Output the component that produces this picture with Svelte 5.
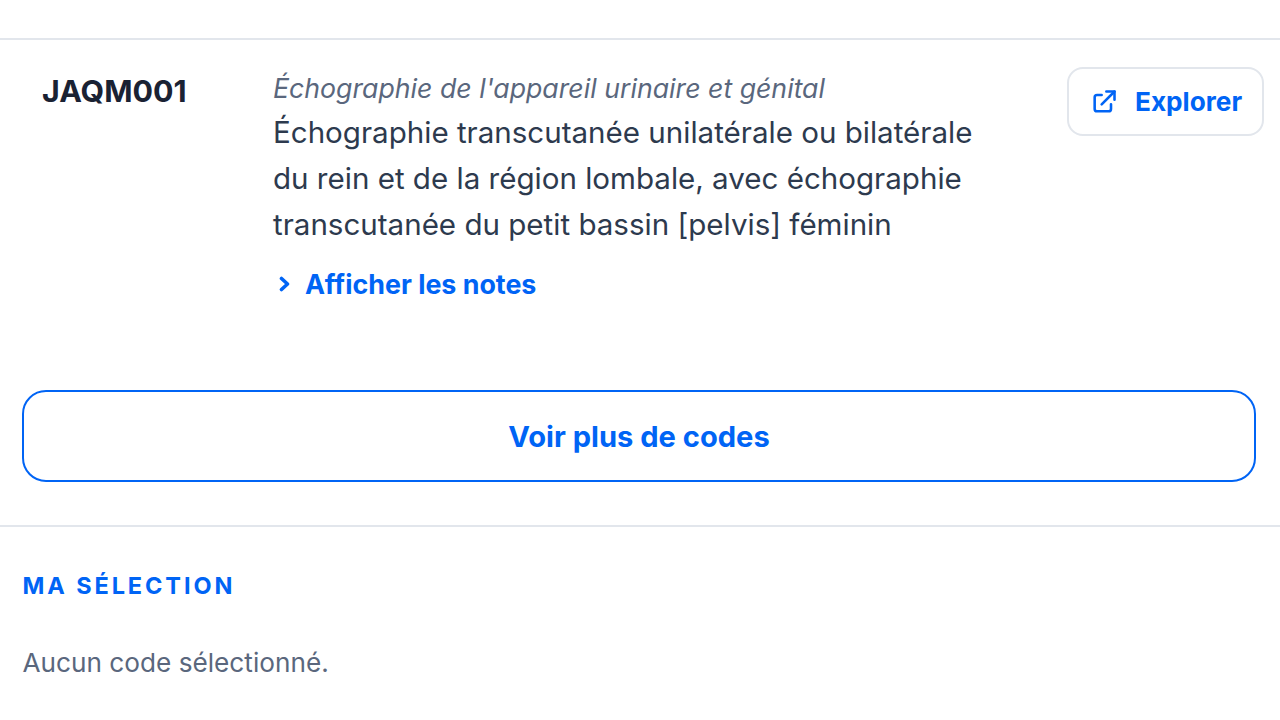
<script>
  let code = "JAQM001";
  let chapter = "Échographie de l'appareil urinaire et génital";
  let label = "Échographie transcutanée unilatérale ou bilatérale du rein et de la région lombale, avec échographie transcutanée du petit bassin [pelvis] féminin";
</script>

<div class="page">
  <div class="result">
    <div class="code">{code}</div>
    <div class="desc">
      <div class="chapter">{chapter}</div>
      <div class="label">{label}</div>
      <div class="notes">
        <svg width="16" height="16" viewBox="0 0 16 16" fill="none" stroke="currentColor" stroke-width="3.6" stroke-linecap="round" stroke-linejoin="round">
          <path d="M4.5 2.5 L10.5 8 L4.5 13.5" />
        </svg>
        <span>Afficher les notes</span>
      </div>
    </div>
    <button class="explore">
      <svg width="28" height="28" viewBox="0 0 24 24" fill="none" stroke="currentColor" stroke-width="2.2" stroke-linecap="round" stroke-linejoin="round">
        <path d="M10 6H6a2 2 0 0 0-2 2v10a2 2 0 0 0 2 2h10a2 2 0 0 0 2-2v-4" />
        <path d="M14 3h7v7" />
        <path d="M21 3L10 14" />
      </svg>
      <span>Explorer</span>
    </button>
  </div>

  <div class="more-wrap">
    <button class="more">Voir plus de codes</button>
  </div>

  <div class="selection">
    <h3>MA SÉLECTION</h3>
    <p>Aucun code sélectionné.</p>
  </div>
</div>

<style>
  :global(body) {
    margin: 0;
    background: #fff;
    font-family: Inter, "Liberation Sans", sans-serif;
  }

  .page {
    width: 1280px;
    height: 720px;
    overflow: hidden;
    padding-top: 38px;
    box-sizing: border-box;
  }

  .result {
    display: flex;
    align-items: flex-start;
    border-top: 2px solid #e2e6ec;
    padding: 27px 16px 0 42px;
    height: 324px;
    box-sizing: border-box;
  }

  .code {
    width: 231px;
    flex: none;
    font-size: 30.4px;
    line-height: 46px;
    margin-top: 1px;
    font-weight: 700;
    color: #1a2233;
  }

  .desc {
    flex: 1;
  }

  .chapter {
    font-size: 26.7px;
    line-height: 42px;
    font-style: italic;
    color: #5a677d;
  }

  .label {
    width: 720px;
    font-size: 29.55px;
    line-height: 46px;
    color: #2d3a4e;
  }

  .notes {
    display: flex;
    align-items: center;
    gap: 12px;
    margin-top: 15px;
    margin-left: 4px;
    font-size: 26.8px;
    line-height: 44px;
    font-weight: 700;
    color: #0064f5;
  }

  .explore {
    flex: none;
    width: 197px;
    height: 69px;
    display: flex;
    align-items: center;
    gap: 17px;
    padding: 0 0 0 21px;
    background: #fff;
    border: 2px solid #e2e6ec;
    border-radius: 16px;
    font-family: inherit;
    font-size: 26.2px;
    font-weight: 700;
    color: #0064f5;
  }

  .more-wrap {
    padding: 28px 24px 43px 22px;
    border-bottom: 2px solid #e2e6ec;
  }

  .more {
    display: block;
    width: 100%;
    height: 92px;
    background: #fff;
    border: 2px solid #0064f5;
    border-radius: 24px;
    font-family: inherit;
    font-size: 29.1px;
    font-weight: 700;
    color: #0064f5;
  }

  .selection {
    padding: 0 22.5px;
  }

  h3 {
    margin: 43px 0 0;
    font-size: 23.5px;
    line-height: 32px;
    font-weight: 700;
    letter-spacing: 2.9px;
    color: #0064f5;
  }

  p {
    margin: 39px 0 0;
    font-size: 26.2px;
    line-height: 44px;
    color: #5a677d;
  }
</style>
